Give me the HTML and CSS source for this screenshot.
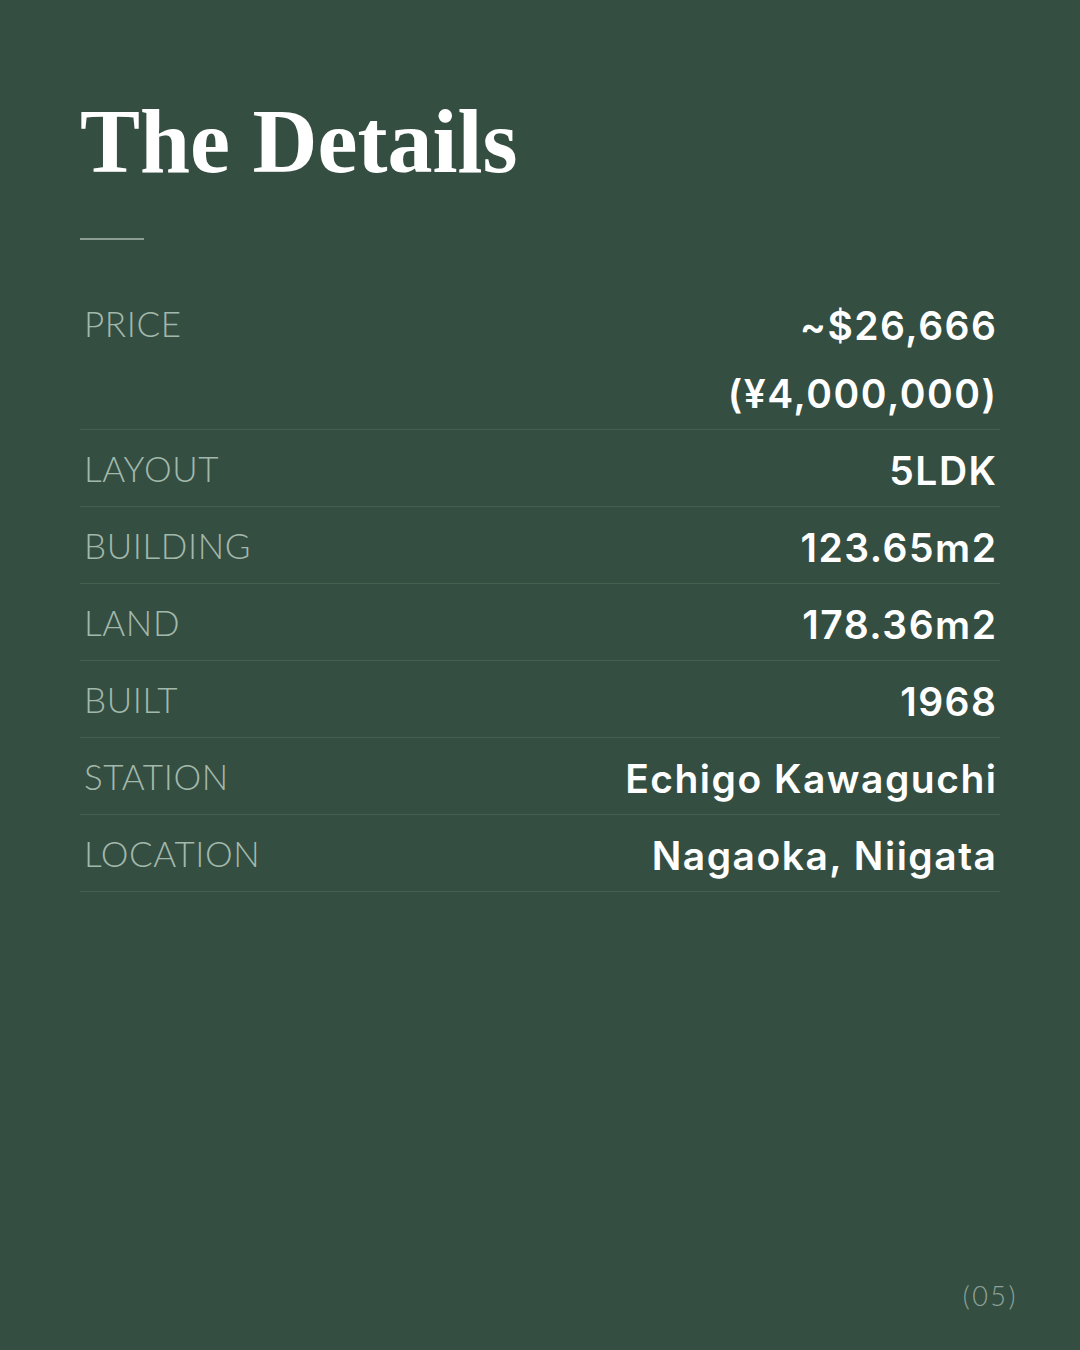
FILE: index.html
```html
<!DOCTYPE html>
<html lang="en">
<head>
<meta charset="utf-8">
<title>The Details</title>
<link rel="stylesheet" href="styles.css">
</head>
<body>
<main class="page">
  <h1 class="title">The Details</h1>
  <div class="rule"></div>
  <dl class="details">
    <div class="row">
      <dt class="label">PRICE</dt>
      <dd class="value">~$26,666<br>(¥4,000,000)</dd>
    </div>
    <div class="row">
      <dt class="label">LAYOUT</dt>
      <dd class="value">5LDK</dd>
    </div>
    <div class="row">
      <dt class="label">BUILDING</dt>
      <dd class="value">123.65m2</dd>
    </div>
    <div class="row">
      <dt class="label">LAND</dt>
      <dd class="value">178.36m2</dd>
    </div>
    <div class="row">
      <dt class="label">BUILT</dt>
      <dd class="value">1968</dd>
    </div>
    <div class="row">
      <dt class="label">STATION</dt>
      <dd class="value">Echigo Kawaguchi</dd>
    </div>
    <div class="row">
      <dt class="label">LOCATION</dt>
      <dd class="value">Nagaoka, Niigata</dd>
    </div>
  </dl>
  <footer class="pagenum">(05)</footer>
</main>
</body>
</html>
```
FILE: styles.css
```css
html, body {
  margin: 0;
  padding: 0;
}
body {
  background: #354e42;
}
.page {
  box-sizing: border-box;
  width: 1080px;
  height: 1350px;
  padding: 97px 80px 38px;
  display: flex;
  flex-direction: column;
  background: #354e42;
  color: #ffffff;
}
.title {
  margin: 0;
  font-family: "Liberation Serif", "Times New Roman", serif;
  font-weight: 700;
  font-size: 90px;
  line-height: 90px;
  color: #ffffff;
}
.rule {
  width: 64px;
  height: 2px;
  margin-top: 51px;
  background: #8a9e93;
}
.details {
  margin: 45px 0 0;
  padding: 0;
}
.row {
  display: flex;
  justify-content: space-between;
  align-items: flex-start;
  padding: 4px 4px;
  border-bottom: 1px solid #45604f;
}
.label {
  margin: 0;
  font-family: Lato, "Open Sans", sans-serif;
  font-weight: 300;
  font-size: 35px;
  line-height: 68px;
  letter-spacing: 0.6px;
  color: #a2b8ab;
}
.value {
  margin: 0 -1.5px -3px 0;
  padding-top: 3px;
  font-family: Inter, "Noto Sans", sans-serif;
  font-weight: 600;
  font-size: 39px;
  line-height: 68px;
  letter-spacing: 1.5px;
  text-align: right;
  color: #ffffff;
}
.pagenum {
  margin-top: auto;
  align-self: flex-end;
  margin-right: -18px;
  font-family: Lato, "Open Sans", sans-serif;
  font-weight: 300;
  font-size: 27px;
  letter-spacing: 2.5px;
  color: #8ea297;
}
```
